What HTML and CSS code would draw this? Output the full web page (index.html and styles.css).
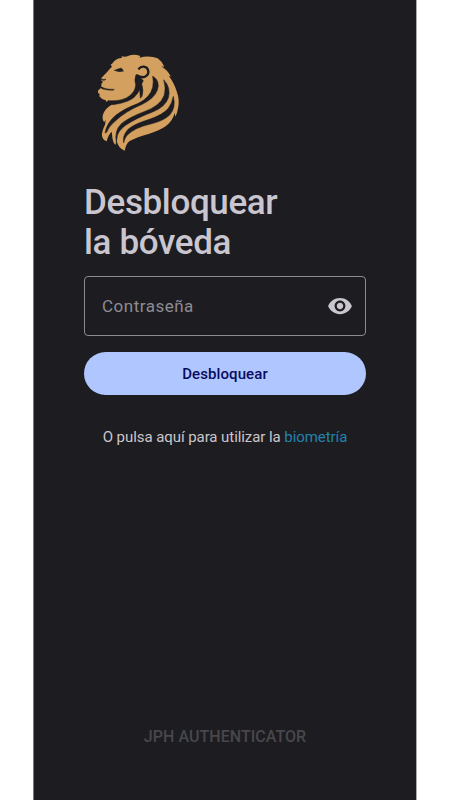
FILE: index.html
```
<!DOCTYPE html>
<html lang="es">
<head>
<meta charset="utf-8">
<title>JPH Authenticator</title>
<link rel="stylesheet" href="styles.css">
</head>
<body>
<main class="screen">
  <svg class="logo" viewBox="0 0 288 324" aria-hidden="true">
    <path class="lion" d="M66 56 L62 50 Q67 47 71 41 Q83 29 96 30 L94 25 Q107 28 116 23 Q132 17 151 24 L148 29 Q178 21 203 31 Q215 39 223 56 L214 55 Q232 66 243 86 L236 83 Q253 105 260 130 Q270 157 264 181 Q262 196 256 206 L254 195 Q248 219 228 234 Q208 248 178 257 Q140 267 119 279 Q108 287 104 308 Q85 301 80 279 L76 291 Q67 282 66 258 L65 251 Q55 260 50 280 Q38 276 36 263 Q34 253 45 230 L47 215 L43 222 Q37 218 38 203 Q41 188 56 176 Q65 168 79 165 L60 163 L55 157 L50 162 L47 157 Q33 153 28 145 L29 139 Q22 134 24 128 L31 121 Q39 124 42 120 L34 116 L34 108 L39 101 Q30 97 34 90 L52 71 Q58 63 66 56Z"/>
    <g class="cut">
      <path d="M73 67 L93 60 L97 63 L98 67 L101 69 Q86 73 80 69 Z"/>
      <path d="M34 92 Q42 97 48 93 L45 96 Q40 98 34 95Z"/>
      <path d="M36 119 Q54 125 73 124 L69 127 Q53 127 38 123Z"/>
      <path d="M138 80 L145 81 Q146 89 153 91 L160 98 L155 108 Q162 127 156 145 L151 151 L149 125 Q138 149 114 159 Q94 167 70 170 L57 166 L55 158 Q98 161 119 143 Q136 130 137 110 Q132 96 138 80Z"/>
      <path d="M188 84 Q212 99 202 127 Q193 151 157 169 Q106 190 75 220 Q56 236 50 253 L45 255 Q50 224 78 201 Q106 180 145 166 Q181 148 188 118 Q191 101 188 84Z"/>
      <path d="M221 95 Q244 119 235 150 Q225 177 190 191 Q137 211 107 232 Q82 250 81 270 L79 284 Q72 248 94 227 Q117 208 162 191 Q210 174 222 143 Q229 122 221 95Z"/>
      <path d="M250 145 Q259 179 239 201 Q220 219 182 228 Q133 239 110 263 Q103 273 101 285 Q96 263 115 243 Q133 228 178 214 Q219 200 235 181 Q246 166 250 145Z"/>
    </g>
    <path class="ear" d="M147 62 Q152 55 161 56 C175 58 179 73 171 82 C163 91 151 88 141 83"/>
  </svg>
  <h1 class="title">Desbloquear<br>la bóveda</h1>
  <div class="field">
    <span class="placeholder">Contraseña</span>
    <svg class="eye" viewBox="0 0 24 24" aria-hidden="true"><path d="M12 4.5C7 4.5 2.73 7.61 1 12c1.73 4.39 6 7.5 11 7.5s9.27-3.11 11-7.5c-1.73-4.39-6-7.5-11-7.5zM12 17c-2.76 0-5-2.24-5-5s2.24-5 5-5 5 2.24 5 5-2.24 5-5 5zm0-8c-1.66 0-3 1.34-3 3s1.34 3 3 3 3-1.34 3-3-1.34-3-3-3z"/></svg>
  </div>
  <button class="unlock" type="button">Desbloquear</button>
  <p class="hint">O pulsa aquí para utilizar la <span class="link">biometría</span></p>
  <footer class="brand">JPH AUTHENTICATOR</footer>
</main>
</body>
</html>
```
FILE: styles.css
```
* { box-sizing: border-box; }
body { margin: 0; background: #fff; font-family: Roboto, sans-serif; }
.screen {
  display: flex;
  flex-direction: column;
  width: 384px;
  height: 800px;
  margin-left: 33px;
  padding: 48px 50px 51px;
  border-left: 1px solid #78777b;
  border-right: 1px solid #a9a8ab;
  background: #1d1c21;
}
.logo { width: 96px; height: 108px; margin-left: 6px; flex: none; }
.lion { fill: #d4a05f; }
.cut { fill: #1d1c21; stroke: #1d1c21; stroke-width: 1.5; stroke-linejoin: round; }
.ear { fill: none; stroke: #1d1c21; stroke-width: 7; stroke-linecap: round; }
.title {
  margin: 27px 0 0;
  color: #cac6d0;
  font-size: 35px;
  font-weight: 500;
  letter-spacing: -.36px;
  line-height: 40px;
}
.field {
  display: flex;
  align-items: center;
  justify-content: space-between;
  flex: none;
  height: 60px;
  margin-top: 13px;
  padding: 0 12px 0 17px;
  border: 1px solid #8c8a90;
  border-radius: 4px;
}
.placeholder { color: #8e8c92; font-size: 17px; letter-spacing: .5px; }
.eye { width: 26px; height: 26px; fill: #cac6d0; }
.unlock {
  flex: none;
  height: 43px;
  margin-top: 16px;
  padding: 0;
  border: 0;
  border-radius: 22px;
  background: #b0c6ff;
  color: #080c60;
  font: 500 15px Roboto, sans-serif;
  letter-spacing: .1px;
}
.hint { margin: 32px 0 0; color: #cac6ca; font-size: 15px; letter-spacing: -.07px; line-height: 20px; text-align: center; white-space: nowrap; }
.link { color: #2482ad; }
.brand { margin-top: auto; color: #48474c; font-size: 16px; font-weight: 500; letter-spacing: .04px; line-height: 24px; text-align: center; }
```
